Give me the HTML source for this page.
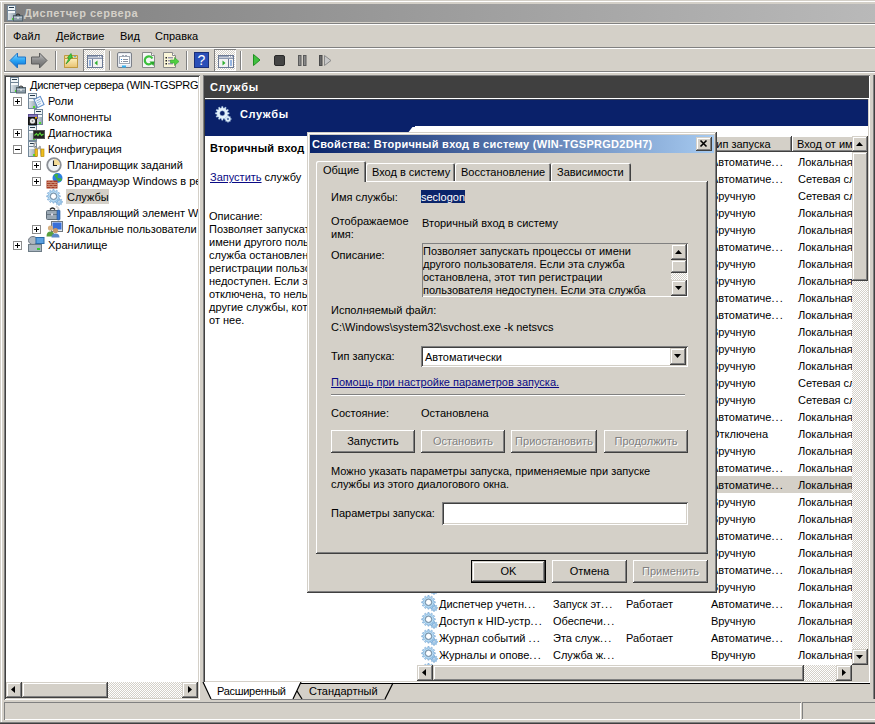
<!DOCTYPE html><html><head><meta charset="utf-8"><style>
html,body{margin:0;padding:0}
body{width:875px;height:724px;overflow:hidden;position:relative;background:#d4d0c8;font-family:"Liberation Sans",sans-serif;font-size:11px;line-height:13px;color:#000}
.t{position:absolute;white-space:nowrap;height:13px;line-height:13px}
.e{letter-spacing:1.1px}
</style></head><body>
<svg width="0" height="0" style="position:absolute"><defs><linearGradient id="tw" x1="0" x2="1"><stop offset="0" stop-color="#dfe6eb"/><stop offset="1" stop-color="#93a3ae"/></linearGradient><g id="g"><path d="M15.53 12.29 L16.47 12.43 L16.47 13.37 L15.53 13.51 L15.22 14.26 L15.78 15.02 L15.12 15.68 L14.36 15.12 L13.61 15.43 L13.47 16.37 L12.53 16.37 L12.39 15.43 L11.64 15.12 L10.88 15.68 L10.22 15.02 L10.78 14.26 L10.47 13.51 L9.53 13.37 L9.53 12.43 L10.47 12.29 L10.78 11.54 L10.22 10.78 L10.88 10.12 L11.64 10.68 L12.39 10.37 L12.53 9.43 L13.47 9.43 L13.61 10.37 L14.36 10.68 L15.12 10.12 L15.78 10.78 L15.22 11.54Z M14.10 12.90 A1.1 1.1 0 1 0 11.90 12.90 A1.1 1.1 0 1 0 14.10 12.90Z" fill="#a8d0ee" stroke="#6a9ccc" stroke-width="0.6" fill-rule="evenodd"/><path d="M12.64 6.49 L14.27 6.70 L14.27 7.90 L12.64 8.11 L12.35 9.16 L13.67 10.16 L13.06 11.21 L11.54 10.57 L10.77 11.34 L11.41 12.86 L10.36 13.47 L9.36 12.15 L8.31 12.44 L8.10 14.07 L6.90 14.07 L6.69 12.44 L5.64 12.15 L4.64 13.47 L3.59 12.86 L4.23 11.34 L3.46 10.57 L1.94 11.21 L1.33 10.16 L2.65 9.16 L2.36 8.11 L0.73 7.90 L0.73 6.70 L2.36 6.49 L2.65 5.44 L1.33 4.44 L1.94 3.39 L3.46 4.03 L4.23 3.26 L3.59 1.74 L4.64 1.13 L5.64 2.45 L6.69 2.16 L6.90 0.53 L8.10 0.53 L8.31 2.16 L9.36 2.45 L10.36 1.13 L11.41 1.74 L10.77 3.26 L11.54 4.03 L13.06 3.39 L13.67 4.44 L12.35 5.44Z M10.50 7.30 A3.0 3.0 0 1 0 4.50 7.30 A3.0 3.0 0 1 0 10.50 7.30Z" fill="#b4daf4" stroke="#6a9ccc" stroke-width="0.6" fill-rule="evenodd"/><circle cx="7.5" cy="7.3" r="3.3" fill="none" stroke="#6e7c8a" stroke-width="0.7"/></g></defs></svg>
<div style="position:absolute;left:0px;top:1px;width:875px;height:1px;background:#ffffff"></div>
<div style="position:absolute;left:1px;top:1px;width:1px;height:721px;background:#ffffff"></div>
<div style="position:absolute;left:4px;top:4px;width:871px;height:18px;background:linear-gradient(90deg,#808080,#b9b9b9)"></div>
<div class="t" style="left:24px;top:7px;font-weight:bold;font-size:11px;line-height:13px;color:#d4d0c8;letter-spacing:0.5px">Диспетчер сервера</div>
<div style="position:absolute;left:4px;top:23px;width:871px;height:1px;background:#808080"></div>
<div style="position:absolute;left:5px;top:24px;width:870px;height:1px;background:#ffffff"></div>
<div style="position:absolute;left:4px;top:23px;width:1px;height:49px;background:#808080"></div>
<div style="position:absolute;left:5px;top:24px;width:1px;height:48px;background:#ffffff"></div>
<div class="t" style="left:13px;top:30px;">Файл</div>
<div class="t" style="left:56px;top:30px;">Действие</div>
<div class="t" style="left:120px;top:30px;">Вид</div>
<div class="t" style="left:155px;top:30px;">Справка</div>
<div style="position:absolute;left:5px;top:47px;width:870px;height:1px;background:#808080"></div>
<div style="position:absolute;left:5px;top:48px;width:870px;height:1px;background:#ffffff"></div>
<div style="position:absolute;left:5px;top:71px;width:870px;height:1px;background:#808080"></div>
<div style="position:absolute;left:4px;top:72px;width:871px;height:1px;background:#ffffff"></div>
<svg style="position:absolute;left:9px;top:52px" width="18" height="17"><defs><linearGradient id="ab" x1="0" y1="0" x2="0" y2="1"><stop offset="0" stop-color="#8fdcff"/><stop offset="0.5" stop-color="#2aa4f4"/><stop offset="1" stop-color="#0a6ad0"/></linearGradient><linearGradient id="af" x1="0" y1="0" x2="0" y2="1"><stop offset="0" stop-color="#c8c8c8"/><stop offset="0.5" stop-color="#8a8a8a"/><stop offset="1" stop-color="#6a6a6a"/></linearGradient></defs><path d="M1 8.5 L8.5 1 L8.5 5 L16.5 5 L16.5 12 L8.5 12 L8.5 16 Z" fill="url(#ab)" stroke="#1d74c8" stroke-width="1"/></svg>
<svg style="position:absolute;left:30px;top:52px" width="18" height="17"><path d="M17 8.5 L9.5 1 L9.5 5 L1.5 5 L1.5 12 L9.5 12 L9.5 16 Z" fill="url(#af)" stroke="#5c5c5c" stroke-width="1"/></svg>
<div style="position:absolute;left:55px;top:51px;width:1px;height:19px;background:#808080"></div>
<div style="position:absolute;left:56px;top:51px;width:1px;height:19px;background:#ffffff"></div>
<svg style="position:absolute;left:63px;top:53px" width="17" height="16"><defs><linearGradient id="fd" x1="0" y1="0" x2="0" y2="1"><stop offset="0" stop-color="#fdeebc"/><stop offset="1" stop-color="#e8c270"/></linearGradient></defs><path d="M1.5 2.5 L14.5 2.5 L14.5 14.5 L1.5 14.5Z" fill="#f0d690" stroke="#c09a40"/><path d="M1.5 5.5 L14.5 5.5 L14.5 14.5 L1.5 14.5Z" fill="url(#fd)" stroke="#c09a40"/><rect x="11" y="3.2" width="2" height="1" fill="#3aa0e8"/><path d="M3 11 Q5 7 6 5 L4.5 4.5 L8 0.5 L9.5 5 L8 4.8 Q7 8 3 11Z" fill="#3ccc3c" stroke="#1e8a1e" stroke-width="0.6"/></svg>
<div style="position:absolute;left:83px;top:49px;width:22px;height:22px;box-shadow:inset 1px 1px #808080,inset -1px -1px #ffffff;background-color:#fff;background-image:linear-gradient(45deg,#d4d0c8 25%,transparent 25%,transparent 75%,#d4d0c8 75%),linear-gradient(45deg,#d4d0c8 25%,transparent 25%,transparent 75%,#d4d0c8 75%);background-size:2px 2px;background-position:0 0,1px 1px"></div>
<svg style="position:absolute;left:87px;top:55px" width="16" height="13"><rect x="0.5" y="0.5" width="15" height="12" fill="#f2f2f2" stroke="#6c7a94"/><rect x="1" y="1" width="14" height="1.5" fill="#9aa6bc"/><rect x="11" y="1" width="1" height="1" fill="#fff"/><rect x="13" y="1" width="1" height="1" fill="#fff"/><rect x="1" y="3" width="14" height="1" fill="#8c98b0"/><rect x="5" y="4" width="1" height="8" fill="#6c7a94"/><rect x="2" y="5.5" width="2" height="1" fill="#3a78d0"/><rect x="2" y="7.5" width="2" height="1" fill="#3a78d0"/><rect x="2" y="9.5" width="2" height="1" fill="#3a78d0"/><path d="M10.5 5.5 L7.5 8 L10.5 10.5Z" fill="#30b030"/></svg>
<div style="position:absolute;left:109px;top:51px;width:1px;height:19px;background:#808080"></div>
<div style="position:absolute;left:110px;top:51px;width:1px;height:19px;background:#ffffff"></div>
<svg style="position:absolute;left:117px;top:52px" width="16" height="16"><rect x="0.5" y="0.5" width="14" height="15" rx="1.5" fill="#e4e8ee" stroke="#7c8088"/><rect x="2" y="2" width="11" height="11" fill="#f8f8fa"/><rect x="2.5" y="4.5" width="10" height="7" fill="#fff" stroke="#a0a8b4"/><rect x="5" y="3" width="2" height="1.5" fill="#a0a8b4"/><rect x="8" y="3" width="2" height="1.5" fill="#a0a8b4"/><rect x="4" y="7" width="1" height="1" fill="#2a8ae0"/><rect x="6" y="7" width="5" height="1" fill="#8890a0"/><rect x="4" y="9" width="1" height="1" fill="#8890a0"/><rect x="6" y="9" width="5" height="1" fill="#8890a0"/><rect x="5" y="13.5" width="4" height="2" fill="#30b0f0"/></svg>
<svg style="position:absolute;left:142px;top:52px" width="14" height="16"><path d="M0.5 0.5 L9.5 0.5 L12.5 3.5 L12.5 15.5 L0.5 15.5Z" fill="#f6f6f6" stroke="#8a8a8a"/><path d="M9.5 0.5 L9.5 3.5 L12.5 3.5" fill="#fff" stroke="#8a8a8a"/><path d="M9.6 11.2 A4 4 0 1 1 10.4 6.6" fill="none" stroke="#3cc03c" stroke-width="2.2"/><path d="M7.5 9.5 L12.5 9.5 L11.5 14Z" fill="#2aa82a"/></svg>
<svg style="position:absolute;left:163px;top:52px" width="17" height="16"><path d="M0.5 0.5 L9.5 0.5 L12.5 3.5 L12.5 15.5 L0.5 15.5Z" fill="#fbf6d8" stroke="#8a8a8a"/><path d="M9.5 0.5 L9.5 3.5 L12.5 3.5" fill="#fff" stroke="#8a8a8a"/><rect x="2.5" y="5" width="1.5" height="1.5" fill="#222"/><rect x="2.5" y="8" width="1.5" height="1.5" fill="#222"/><rect x="2.5" y="11" width="1.5" height="1.5" fill="#222"/><rect x="5" y="5.3" width="5" height="1" fill="#7070a0"/><rect x="5" y="8.3" width="5" height="1" fill="#7070a0"/><rect x="5" y="11.3" width="5" height="1" fill="#7070a0"/><path d="M7.5 8 L11.5 8 L11.5 5.5 L16 9.5 L11.5 13.5 L11.5 11 L7.5 11Z" fill="#50d040" stroke="#34a030" stroke-width="0.6"/></svg>
<div style="position:absolute;left:186px;top:51px;width:1px;height:19px;background:#808080"></div>
<div style="position:absolute;left:187px;top:51px;width:1px;height:19px;background:#ffffff"></div>
<svg style="position:absolute;left:194px;top:52px" width="15" height="16"><rect x="0.5" y="0.5" width="14" height="15" fill="#2a4fb8" stroke="#1a2f78"/><text x="7.5" y="13" font-family="Liberation Sans" font-size="14" fill="#fff" text-anchor="middle">?</text></svg>
<div style="position:absolute;left:214px;top:49px;width:22px;height:22px;box-shadow:inset 1px 1px #808080,inset -1px -1px #ffffff;background-color:#fff;background-image:linear-gradient(45deg,#d4d0c8 25%,transparent 25%,transparent 75%,#d4d0c8 75%),linear-gradient(45deg,#d4d0c8 25%,transparent 25%,transparent 75%,#d4d0c8 75%);background-size:2px 2px;background-position:0 0,1px 1px"></div>
<svg style="position:absolute;left:218px;top:55px" width="16" height="13"><rect x="0.5" y="0.5" width="15" height="12" fill="#f2f2f2" stroke="#6c7a94"/><rect x="1" y="1" width="14" height="1.5" fill="#9aa6bc"/><rect x="11" y="1" width="1" height="1" fill="#fff"/><rect x="13" y="1" width="1" height="1" fill="#fff"/><rect x="1" y="3" width="14" height="1" fill="#8c98b0"/><rect x="10" y="4" width="1" height="8" fill="#6c7a94"/><rect x="12" y="5.5" width="2" height="1" fill="#3a78d0"/><rect x="12" y="7.5" width="2" height="1" fill="#3a78d0"/><rect x="12" y="9.5" width="2" height="1" fill="#3a78d0"/><path d="M4.5 5.5 L7.5 8 L4.5 10.5Z" fill="#30b030"/></svg>
<div style="position:absolute;left:240px;top:51px;width:1px;height:19px;background:#808080"></div>
<div style="position:absolute;left:241px;top:51px;width:1px;height:19px;background:#ffffff"></div>
<svg style="position:absolute;left:253px;top:54px" width="8" height="12"><path d="M0.5 0.5 L7 6 L0.5 11.5Z" fill="#40c040" stroke="#209020"/></svg>
<svg style="position:absolute;left:274px;top:55px" width="11" height="11"><rect x="0.5" y="0.5" width="10" height="10" rx="1.5" fill="#444" stroke="#2a2a2a"/></svg>
<svg style="position:absolute;left:298px;top:55px" width="9" height="11"><rect x="0.5" y="0.5" width="2.5" height="10" fill="#8a8a8a" stroke="#5a5a5a"/><rect x="5.5" y="0.5" width="2.5" height="10" fill="#8a8a8a" stroke="#5a5a5a"/></svg>
<svg style="position:absolute;left:319px;top:55px" width="13" height="11"><rect x="0.5" y="0.5" width="2.5" height="10" fill="#6a6a6a" stroke="#4a4a4a"/><path d="M5.5 0.5 L12 5.5 L5.5 10.5Z" fill="#c8c8c8" stroke="#8a8a8a"/></svg>
<div style="position:absolute;left:4px;top:75px;width:196px;height:625px;background:#ffffff;box-shadow:inset 1px 1px #808080,inset -1px -1px #ffffff,inset 2px 2px #404040,inset -2px -2px #d4d0c8"></div>
<div style="position:absolute;left:6px;top:77px;width:192px;height:605px;overflow:hidden">
<div class="t" style="left:24px;top:2px;letter-spacing:-0.3px">Диспетчер сервера (WIN-TGSPRGD2DH7)</div>
<div style="position:absolute;left:7px;top:20px;width:9px;height:9px;background:#fff;box-shadow:inset 0 0 0 1px #8c8c8c"></div>
<div style="position:absolute;left:9px;top:24px;width:5px;height:1px;background:#000"></div>
<div style="position:absolute;left:11px;top:22px;width:1px;height:5px;background:#000"></div>
<div class="t" style="left:42px;top:18px;">Роли</div>
<div class="t" style="left:42px;top:34px;">Компоненты</div>
<div style="position:absolute;left:7px;top:52px;width:9px;height:9px;background:#fff;box-shadow:inset 0 0 0 1px #8c8c8c"></div>
<div style="position:absolute;left:9px;top:56px;width:5px;height:1px;background:#000"></div>
<div style="position:absolute;left:11px;top:54px;width:1px;height:5px;background:#000"></div>
<div class="t" style="left:42px;top:50px;">Диагностика</div>
<div style="position:absolute;left:7px;top:68px;width:9px;height:9px;background:#fff;box-shadow:inset 0 0 0 1px #8c8c8c"></div>
<div style="position:absolute;left:9px;top:72px;width:5px;height:1px;background:#000"></div>
<div class="t" style="left:42px;top:66px;">Конфигурация</div>
<div style="position:absolute;left:26px;top:84px;width:9px;height:9px;background:#fff;box-shadow:inset 0 0 0 1px #8c8c8c"></div>
<div style="position:absolute;left:28px;top:88px;width:5px;height:1px;background:#000"></div>
<div style="position:absolute;left:30px;top:86px;width:1px;height:5px;background:#000"></div>
<div class="t" style="left:61px;top:82px;">Планировщик заданий</div>
<div style="position:absolute;left:26px;top:100px;width:9px;height:9px;background:#fff;box-shadow:inset 0 0 0 1px #8c8c8c"></div>
<div style="position:absolute;left:28px;top:104px;width:5px;height:1px;background:#000"></div>
<div style="position:absolute;left:30px;top:102px;width:1px;height:5px;background:#000"></div>
<div class="t" style="left:61px;top:98px;">Брандмауэр Windows в режиме повышенной безопасности</div>
<div style="position:absolute;left:60px;top:112px;width:43px;height:15px;background:#d4d0c8"></div>
<div class="t" style="left:61px;top:114px;">Службы</div>
<div class="t" style="left:61px;top:130px;">Управляющий элемент WMI</div>
<div style="position:absolute;left:26px;top:148px;width:9px;height:9px;background:#fff;box-shadow:inset 0 0 0 1px #8c8c8c"></div>
<div style="position:absolute;left:28px;top:152px;width:5px;height:1px;background:#000"></div>
<div style="position:absolute;left:30px;top:150px;width:1px;height:5px;background:#000"></div>
<div class="t" style="left:61px;top:146px;">Локальные пользователи и группы</div>
<div style="position:absolute;left:7px;top:164px;width:9px;height:9px;background:#fff;box-shadow:inset 0 0 0 1px #8c8c8c"></div>
<div style="position:absolute;left:9px;top:168px;width:5px;height:1px;background:#000"></div>
<div style="position:absolute;left:11px;top:166px;width:1px;height:5px;background:#000"></div>
<div class="t" style="left:42px;top:162px;">Хранилище</div>
</div>
<svg style="position:absolute;left:10px;top:77px" width="17" height="17"><g transform="translate(0,0)"><defs></defs><rect x="0.5" y="0.5" width="8" height="15" fill="url(#tw)" stroke="#74889a"/><rect x="1" y="1" width="7" height="4" fill="#eef3f6"/><rect x="2" y="2" width="5" height="1" fill="#24394a"/><rect x="1" y="6" width="7" height="2" fill="#f4f7f9"/><rect x="1" y="5" width="7" height="1" fill="#6e8294"/><rect x="5" y="13" width="2" height="2" fill="#4fdc2f"/></g><rect x="6.5" y="10.5" width="9" height="5.5" fill="#8c9ca8" stroke="#56666f"/><rect x="7" y="12" width="8" height="1" fill="#b8c4cc"/><path d="M9 10.5 Q11 7.5 13 10.5" fill="none" stroke="#222" stroke-width="1.2"/><rect x="10.5" y="12" width="1" height="2" fill="#fff"/></svg>
<svg style="position:absolute;left:7px;top:5px" width="17" height="17"><g transform="translate(0,0)"><defs></defs><rect x="0.5" y="0.5" width="8" height="15" fill="url(#tw)" stroke="#74889a"/><rect x="1" y="1" width="7" height="4" fill="#eef3f6"/><rect x="2" y="2" width="5" height="1" fill="#24394a"/><rect x="1" y="6" width="7" height="2" fill="#f4f7f9"/><rect x="1" y="5" width="7" height="1" fill="#6e8294"/><rect x="5" y="13" width="2" height="2" fill="#4fdc2f"/></g><rect x="6.5" y="10.5" width="9" height="5.5" fill="#8c9ca8" stroke="#56666f"/><rect x="7" y="12" width="8" height="1" fill="#b8c4cc"/><path d="M9 10.5 Q11 7.5 13 10.5" fill="none" stroke="#222" stroke-width="1.2"/><rect x="10.5" y="12" width="1" height="2" fill="#fff"/></svg>
<svg style="position:absolute;left:28px;top:93px" width="17" height="16"><g transform="translate(0,0)"><defs></defs><rect x="0.5" y="0.5" width="8" height="15" fill="url(#tw)" stroke="#74889a"/><rect x="1" y="1" width="7" height="4" fill="#eef3f6"/><rect x="2" y="2" width="5" height="1" fill="#24394a"/><rect x="1" y="6" width="7" height="2" fill="#f4f7f9"/><rect x="1" y="5" width="7" height="1" fill="#6e8294"/><rect x="5" y="13" width="2" height="2" fill="#4fdc2f"/></g><g transform="rotate(-25 11 9)"><rect x="7.5" y="4.5" width="7" height="9" fill="#f2f6fb" stroke="#5c8cc8"/><path d="M9 7 H13 M9 9 H13 M9 11 H12" stroke="#8ab0d8" stroke-width="0.8"/></g></svg>
<svg style="position:absolute;left:28px;top:109px" width="17" height="16"><g transform="translate(6,0)"><defs></defs><rect x="0.5" y="0.5" width="8" height="15" fill="url(#tw)" stroke="#74889a"/><rect x="1" y="1" width="7" height="4" fill="#eef3f6"/><rect x="2" y="2" width="5" height="1" fill="#24394a"/><rect x="1" y="6" width="7" height="2" fill="#f4f7f9"/><rect x="1" y="5" width="7" height="1" fill="#6e8294"/><rect x="5" y="13" width="2" height="2" fill="#4fdc2f"/></g><rect x="0.5" y="5.5" width="9" height="4" fill="#8478b8" stroke="#5a4e90"/><rect x="0.5" y="8.5" width="8" height="7" fill="#2a2a2a" stroke="#111"/><circle cx="4.5" cy="12" r="2.6" fill="#e8e8e8"/><circle cx="4.5" cy="12" r="0.8" fill="#777"/><rect x="7" y="8" width="2" height="1.5" fill="#f0b000"/></svg>
<svg style="position:absolute;left:28px;top:125px" width="17" height="16"><g transform="translate(0,0)"><defs></defs><rect x="0.5" y="0.5" width="8" height="15" fill="url(#tw)" stroke="#74889a"/><rect x="1" y="1" width="7" height="4" fill="#eef3f6"/><rect x="2" y="2" width="5" height="1" fill="#24394a"/><rect x="1" y="6" width="7" height="2" fill="#f4f7f9"/><rect x="1" y="5" width="7" height="1" fill="#6e8294"/><rect x="5" y="13" width="2" height="2" fill="#4fdc2f"/></g><rect x="5.5" y="5.5" width="11" height="8" fill="#222" stroke="#555"/><path d="M6.5 10.5 L8.5 8.5 L10 10.5 L12 8 L13.5 10.5 L15.5 9" fill="none" stroke="#5cd83a" stroke-width="1.1"/></svg>
<svg style="position:absolute;left:28px;top:141px" width="17" height="16"><g transform="translate(0,0)"><defs></defs><rect x="0.5" y="0.5" width="8" height="15" fill="url(#tw)" stroke="#74889a"/><rect x="1" y="1" width="7" height="4" fill="#eef3f6"/><rect x="2" y="2" width="5" height="1" fill="#24394a"/><rect x="1" y="6" width="7" height="2" fill="#f4f7f9"/><rect x="1" y="5" width="7" height="1" fill="#6e8294"/><rect x="5" y="13" width="2" height="2" fill="#4fdc2f"/></g><path d="M9 1.5 A3 3 0 1 0 12 5 L13.5 15.5" fill="none" stroke="#a8a8a8" stroke-width="1.6"/><rect x="7" y="8" width="2.5" height="7.5" fill="#f0c020" stroke="#b08000" stroke-width="0.6"/><rect x="13" y="8" width="3" height="7.5" fill="#f0c020" stroke="#b08000" stroke-width="0.6"/></svg>
<svg style="position:absolute;left:46px;top:157px" width="17" height="16"><circle cx="8" cy="8" r="6.8" fill="#eef2f6" stroke="#8c9096" stroke-width="1.8"/><path d="M8 2 A6 6 0 0 1 14 8 L8 8Z" fill="#f4dc98"/><path d="M7.5 3.5 L7.5 8.5 L11 8.5" stroke="#222" stroke-width="1.1" fill="none"/></svg>
<svg style="position:absolute;left:46px;top:172px" width="17" height="17"><circle cx="11.5" cy="6" r="5" fill="#2a7ee0"/><path d="M8 3 Q10 1 12 2 Q13 4 11 5 Q13 7 15 6 L16 8 Q14 10 12 9Z" fill="#40b040"/><rect x="0.5" y="8.5" width="11" height="8" fill="#a83c24"/><path d="M0.5 10.5 H11.5 M0.5 12.5 H11.5 M0.5 14.5 H11.5 M3 8.5 V10.5 M7 8.5 V10.5 M5 10.5 V12.5 M9 10.5 V12.5 M3 12.5 V14.5 M7 12.5 V14.5 M5 14.5 V16.5 M9 14.5 V16.5" stroke="#d8a890" stroke-width="0.7"/></svg>
<svg style="position:absolute;left:46px;top:189px" width="17" height="17"><use href="#g"/></svg>
<svg style="position:absolute;left:46px;top:205px" width="17" height="17"><path d="M4 4.5 Q6.5 1.5 9 4.5" fill="none" stroke="#222" stroke-width="1.4"/><rect x="0.5" y="5.5" width="12" height="9" rx="1" fill="#9aa8b4" stroke="#5e6c78"/><rect x="1" y="9" width="11" height="1" fill="#6a7884"/><rect x="5" y="8.5" width="2" height="2" fill="#dde"/><path d="M10 1 L13 4" stroke="#d8d8d8" stroke-width="2"/><rect x="11" y="5" width="3" height="10" rx="1" fill="#3a78d0" stroke="#24508c" stroke-width="0.6"/></svg>
<svg style="position:absolute;left:46px;top:221px" width="17" height="17"><rect x="5.5" y="0.5" width="11" height="10" fill="#e8ecf0" stroke="#707880"/><rect x="6.5" y="1.5" width="9" height="7" fill="#3a70d8"/><circle cx="4.5" cy="7" r="2.6" fill="#d8b080"/><path d="M0.5 15.5 Q0.5 10.5 4.5 10.5 Q8.5 10.5 8.5 15.5Z" fill="#58a040"/><circle cx="9.5" cy="9.5" r="2.6" fill="#c89868"/><path d="M5.5 16.5 Q5.5 12.5 9.5 12.5 Q13.5 12.5 13.5 16.5Z" fill="#5a88c8"/></svg>
<svg style="position:absolute;left:28px;top:236px" width="17" height="16"><rect x="0.5" y="8.5" width="13" height="7" fill="#aab6c0" stroke="#6e7c86"/><rect x="9" y="12" width="3" height="2" fill="#3c3"/><ellipse cx="5" cy="4.5" rx="4.5" ry="4" fill="#b0b8c0" stroke="#707880"/><rect x="8" y="1.5" width="8" height="6" fill="#5aa0e0" stroke="#2a6aa8"/></svg>
<div style="position:absolute;left:6px;top:682px;width:192px;height:16px;background-color:#ffffff;background-image:linear-gradient(45deg,#d4d0c8 25%,transparent 25%,transparent 75%,#d4d0c8 75%),linear-gradient(45deg,#d4d0c8 25%,transparent 25%,transparent 75%,#d4d0c8 75%);background-size:2px 2px;background-position:0 0,1px 1px"></div>
<div style="position:absolute;left:6px;top:682px;width:16px;height:16px;box-shadow:inset -1px -1px #404040,inset 1px 1px #d4d0c8,inset -2px -2px #808080,inset 2px 2px #ffffff;background:#d4d0c8"></div>
<svg style="position:absolute;left:6px;top:682px" width="16" height="16"><polygon points="9,4 9,11 5,7.5" fill="#000"/></svg>
<div style="position:absolute;left:182px;top:682px;width:16px;height:16px;box-shadow:inset -1px -1px #404040,inset 1px 1px #d4d0c8,inset -2px -2px #808080,inset 2px 2px #ffffff;background:#d4d0c8"></div>
<svg style="position:absolute;left:182px;top:682px" width="16" height="16"><polygon points="6,4 6,11 10,7.5" fill="#000"/></svg>
<div style="position:absolute;left:22px;top:682px;width:86px;height:16px;box-shadow:inset -1px -1px #404040,inset 1px 1px #d4d0c8,inset -2px -2px #808080,inset 2px 2px #ffffff;background:#d4d0c8"></div>
<div style="position:absolute;left:4px;top:702px;width:880px;height:18px;box-shadow:inset 1px 1px #808080,inset -1px -1px #ffffff;background:#d4d0c8"></div>
<div style="position:absolute;left:800px;top:703px;width:1px;height:17px;background:#ffffff"></div>
<div style="position:absolute;left:801px;top:702px;width:1px;height:18px;background:#d4d0c8"></div>
<div style="position:absolute;left:802px;top:703px;width:1px;height:16px;background:#808080"></div>
<div style="position:absolute;left:0px;top:722px;width:875px;height:1px;background:#808080"></div>
<div style="position:absolute;left:0px;top:723px;width:875px;height:1px;background:#404040"></div>
<div style="position:absolute;left:203px;top:75px;width:667px;height:608px;background:#ffffff;box-shadow:inset 1px 1px #808080,inset -1px -1px #ffffff,inset 2px 2px #404040,inset -2px -2px #d4d0c8"></div>
<div style="position:absolute;left:205px;top:77px;width:664px;height:21px;background:#404040"></div>
<div class="t" style="left:210px;top:81px;font-weight:bold;font-size:11px;line-height:13px;color:#fff;letter-spacing:0.6px">Службы</div>
<div style="position:absolute;left:205px;top:98px;width:664px;height:1px;background:#ffffff"></div>
<div style="position:absolute;left:205px;top:99px;width:663px;height:1px;background:#3a4050"></div>
<div style="position:absolute;left:205px;top:100px;width:663px;height:26px;background:#0a216a"></div>
<div style="position:absolute;left:205px;top:126px;width:203px;height:10px;background:#0a216a"></div>
<svg style="position:absolute;left:405px;top:126px" width="12" height="10"><path d="M0 0 L10 0 L10 1 L7.5 1 L2.8 7 L0 7Z" fill="#0a216a"/></svg>
<svg style="position:absolute;left:213px;top:104px" width="20" height="20"><path d="M17.43 14.42 L18.27 14.56 L18.27 15.44 L17.43 15.58 L17.13 16.31 L17.62 17.00 L17.00 17.62 L16.31 17.13 L15.58 17.43 L15.44 18.27 L14.56 18.27 L14.42 17.43 L13.69 17.13 L13.00 17.62 L12.38 17.00 L12.87 16.31 L12.57 15.58 L11.73 15.44 L11.73 14.56 L12.57 14.42 L12.87 13.69 L12.38 13.00 L13.00 12.38 L13.69 12.87 L14.42 12.57 L14.56 11.73 L15.44 11.73 L15.58 12.57 L16.31 12.87 L17.00 12.38 L17.62 13.00 L17.13 13.69Z M15.90 15.00 A0.9 0.9 0 1 0 14.10 15.00 A0.9 0.9 0 1 0 15.90 15.00Z" fill="#e4f2fb" stroke="#b0d0e8" stroke-width="0.4" fill-rule="evenodd"/><path d="M14.63 8.46 L16.17 8.69 L16.17 9.91 L14.63 10.14 L14.34 11.24 L15.56 12.21 L14.95 13.27 L13.50 12.70 L12.70 13.50 L13.27 14.95 L12.21 15.56 L11.24 14.34 L10.14 14.63 L9.91 16.17 L8.69 16.17 L8.46 14.63 L7.36 14.34 L6.39 15.56 L5.33 14.95 L5.90 13.50 L5.10 12.70 L3.65 13.27 L3.04 12.21 L4.26 11.24 L3.97 10.14 L2.43 9.91 L2.43 8.69 L3.97 8.46 L4.26 7.36 L3.04 6.39 L3.65 5.33 L5.10 5.90 L5.90 5.10 L5.33 3.65 L6.39 3.04 L7.36 4.26 L8.46 3.97 L8.69 2.43 L9.91 2.43 L10.14 3.97 L11.24 4.26 L12.21 3.04 L13.27 3.65 L12.70 5.10 L13.50 5.90 L14.95 5.33 L15.56 6.39 L14.34 7.36Z M11.80 9.30 A2.5 2.5 0 1 0 6.80 9.30 A2.5 2.5 0 1 0 11.80 9.30Z" fill="#e4f2fb" stroke="#b0d0e8" stroke-width="0.4" fill-rule="evenodd"/></svg>
<div class="t" style="left:240px;top:108px;font-weight:bold;font-size:11px;line-height:13px;color:#fff;letter-spacing:0.6px">Службы</div>
<div class="t" style="left:210px;top:142px;font-weight:bold;line-height:13px;letter-spacing:0.2px">Вторичный вход в систему</div>
<div class="t" style="left:210px;top:171px;"><span style="color:#0a0a84;text-decoration:underline">Запустить</span> службу</div>
<div class="t" style="left:209px;top:210px;">Описание:</div>
<div class="t" style="left:209px;top:223px;">Позволяет запускать процессы от</div>
<div class="t" style="left:209px;top:236px;">имени другого пользователя. Если эта</div>
<div class="t" style="left:209px;top:249px;">служба остановлена, этот тип</div>
<div class="t" style="left:209px;top:262px;">регистрации пользователя</div>
<div class="t" style="left:209px;top:275px;">недоступен. Если эта служба</div>
<div class="t" style="left:209px;top:288px;">отключена, то нельзя запустить</div>
<div class="t" style="left:209px;top:301px;">другие службы, которые явно зависят</div>
<div class="t" style="left:209px;top:314px;">от нее.</div>
<div style="position:absolute;left:417px;top:136px;width:435px;height:529px;overflow:hidden;background:#fff">
<div style="position:absolute;left:0px;top:0px;width:131px;height:16px;box-shadow:inset -1px -1px #404040,inset 1px 1px #ffffff,inset -2px -2px #808080;background:#d4d0c8"></div>
<div class="t" style="left:5px;top:2px">Имя</div>
<div style="position:absolute;left:131px;top:0px;width:74px;height:16px;box-shadow:inset -1px -1px #404040,inset 1px 1px #ffffff,inset -2px -2px #808080;background:#d4d0c8"></div>
<div class="t" style="left:136px;top:2px">Описание</div>
<div style="position:absolute;left:205px;top:0px;width:85px;height:16px;box-shadow:inset -1px -1px #404040,inset 1px 1px #ffffff,inset -2px -2px #808080;background:#d4d0c8"></div>
<div class="t" style="left:210px;top:2px">Состояние</div>
<div style="position:absolute;left:290px;top:0px;width:85px;height:16px;box-shadow:inset -1px -1px #404040,inset 1px 1px #ffffff,inset -2px -2px #808080;background:#d4d0c8"></div>
<div class="t" style="left:293px;top:2px">Тип запуска</div>
<div style="position:absolute;left:375px;top:0px;width:80px;height:16px;box-shadow:inset -1px -1px #404040,inset 1px 1px #ffffff,inset -2px -2px #808080;background:#d4d0c8"></div>
<div class="t" style="left:380px;top:2px">Вход от имени</div>
<svg style="position:absolute;left:4px;top:17px" width="17" height="17"><use href="#g"/></svg>
<div class="t" style="left:22px;top:20px">Служба</div>
<div class="t" style="left:136px;top:20px">Описание</div>
<div class="t" style="left:209px;top:20px"></div>
<div class="t" style="left:294px;top:20px">Автоматиче<span class="e">...</span></div>
<div class="t" style="left:381px;top:20px">Локальная сл<span class="e">...</span></div>
<svg style="position:absolute;left:4px;top:34px" width="17" height="17"><use href="#g"/></svg>
<div class="t" style="left:22px;top:37px">Служба</div>
<div class="t" style="left:136px;top:37px">Описание</div>
<div class="t" style="left:209px;top:37px"></div>
<div class="t" style="left:294px;top:37px">Автоматиче<span class="e">...</span></div>
<div class="t" style="left:381px;top:37px">Сетевая сл<span class="e">...</span></div>
<svg style="position:absolute;left:4px;top:51px" width="17" height="17"><use href="#g"/></svg>
<div class="t" style="left:22px;top:54px">Служба</div>
<div class="t" style="left:136px;top:54px">Описание</div>
<div class="t" style="left:209px;top:54px"></div>
<div class="t" style="left:294px;top:54px">Вручную</div>
<div class="t" style="left:381px;top:54px">Сетевая сл<span class="e">...</span></div>
<svg style="position:absolute;left:4px;top:68px" width="17" height="17"><use href="#g"/></svg>
<div class="t" style="left:22px;top:71px">Служба</div>
<div class="t" style="left:136px;top:71px">Описание</div>
<div class="t" style="left:209px;top:71px"></div>
<div class="t" style="left:294px;top:71px">Вручную</div>
<div class="t" style="left:381px;top:71px">Локальная сл<span class="e">...</span></div>
<svg style="position:absolute;left:4px;top:85px" width="17" height="17"><use href="#g"/></svg>
<div class="t" style="left:22px;top:88px">Служба</div>
<div class="t" style="left:136px;top:88px">Описание</div>
<div class="t" style="left:209px;top:88px"></div>
<div class="t" style="left:294px;top:88px">Вручную</div>
<div class="t" style="left:381px;top:88px">Локальная сл<span class="e">...</span></div>
<svg style="position:absolute;left:4px;top:102px" width="17" height="17"><use href="#g"/></svg>
<div class="t" style="left:22px;top:105px">Служба</div>
<div class="t" style="left:136px;top:105px">Описание</div>
<div class="t" style="left:209px;top:105px"></div>
<div class="t" style="left:294px;top:105px">Автоматиче<span class="e">...</span></div>
<div class="t" style="left:381px;top:105px">Локальная сл<span class="e">...</span></div>
<svg style="position:absolute;left:4px;top:119px" width="17" height="17"><use href="#g"/></svg>
<div class="t" style="left:22px;top:122px">Служба</div>
<div class="t" style="left:136px;top:122px">Описание</div>
<div class="t" style="left:209px;top:122px"></div>
<div class="t" style="left:294px;top:122px">Вручную</div>
<div class="t" style="left:381px;top:122px">Локальная сл<span class="e">...</span></div>
<svg style="position:absolute;left:4px;top:136px" width="17" height="17"><use href="#g"/></svg>
<div class="t" style="left:22px;top:139px">Служба</div>
<div class="t" style="left:136px;top:139px">Описание</div>
<div class="t" style="left:209px;top:139px"></div>
<div class="t" style="left:294px;top:139px">Вручную</div>
<div class="t" style="left:381px;top:139px">Локальная сл<span class="e">...</span></div>
<svg style="position:absolute;left:4px;top:153px" width="17" height="17"><use href="#g"/></svg>
<div class="t" style="left:22px;top:156px">Служба</div>
<div class="t" style="left:136px;top:156px">Описание</div>
<div class="t" style="left:209px;top:156px"></div>
<div class="t" style="left:294px;top:156px">Автоматиче<span class="e">...</span></div>
<div class="t" style="left:381px;top:156px">Локальная сл<span class="e">...</span></div>
<svg style="position:absolute;left:4px;top:170px" width="17" height="17"><use href="#g"/></svg>
<div class="t" style="left:22px;top:173px">Служба</div>
<div class="t" style="left:136px;top:173px">Описание</div>
<div class="t" style="left:209px;top:173px"></div>
<div class="t" style="left:294px;top:173px">Автоматиче<span class="e">...</span></div>
<div class="t" style="left:381px;top:173px">Локальная сл<span class="e">...</span></div>
<svg style="position:absolute;left:4px;top:187px" width="17" height="17"><use href="#g"/></svg>
<div class="t" style="left:22px;top:190px">Служба</div>
<div class="t" style="left:136px;top:190px">Описание</div>
<div class="t" style="left:209px;top:190px"></div>
<div class="t" style="left:294px;top:190px">Вручную</div>
<div class="t" style="left:381px;top:190px">Локальная сл<span class="e">...</span></div>
<svg style="position:absolute;left:4px;top:204px" width="17" height="17"><use href="#g"/></svg>
<div class="t" style="left:22px;top:207px">Служба</div>
<div class="t" style="left:136px;top:207px">Описание</div>
<div class="t" style="left:209px;top:207px"></div>
<div class="t" style="left:294px;top:207px">Вручную</div>
<div class="t" style="left:381px;top:207px">Локальная сл<span class="e">...</span></div>
<svg style="position:absolute;left:4px;top:221px" width="17" height="17"><use href="#g"/></svg>
<div class="t" style="left:22px;top:224px">Служба</div>
<div class="t" style="left:136px;top:224px">Описание</div>
<div class="t" style="left:209px;top:224px"></div>
<div class="t" style="left:294px;top:224px">Вручную</div>
<div class="t" style="left:381px;top:224px">Локальная сл<span class="e">...</span></div>
<svg style="position:absolute;left:4px;top:238px" width="17" height="17"><use href="#g"/></svg>
<div class="t" style="left:22px;top:241px">Служба</div>
<div class="t" style="left:136px;top:241px">Описание</div>
<div class="t" style="left:209px;top:241px"></div>
<div class="t" style="left:294px;top:241px">Вручную</div>
<div class="t" style="left:381px;top:241px">Сетевая сл<span class="e">...</span></div>
<svg style="position:absolute;left:4px;top:255px" width="17" height="17"><use href="#g"/></svg>
<div class="t" style="left:22px;top:258px">Служба</div>
<div class="t" style="left:136px;top:258px">Описание</div>
<div class="t" style="left:209px;top:258px"></div>
<div class="t" style="left:294px;top:258px">Вручную</div>
<div class="t" style="left:381px;top:258px">Сетевая сл<span class="e">...</span></div>
<svg style="position:absolute;left:4px;top:272px" width="17" height="17"><use href="#g"/></svg>
<div class="t" style="left:22px;top:275px">Служба</div>
<div class="t" style="left:136px;top:275px">Описание</div>
<div class="t" style="left:209px;top:275px"></div>
<div class="t" style="left:294px;top:275px">Автоматиче<span class="e">...</span></div>
<div class="t" style="left:381px;top:275px">Локальная сл<span class="e">...</span></div>
<svg style="position:absolute;left:4px;top:289px" width="17" height="17"><use href="#g"/></svg>
<div class="t" style="left:22px;top:292px">Служба</div>
<div class="t" style="left:136px;top:292px">Описание</div>
<div class="t" style="left:209px;top:292px"></div>
<div class="t" style="left:294px;top:292px">Отключена</div>
<div class="t" style="left:381px;top:292px">Локальная сл<span class="e">...</span></div>
<svg style="position:absolute;left:4px;top:306px" width="17" height="17"><use href="#g"/></svg>
<div class="t" style="left:22px;top:309px">Служба</div>
<div class="t" style="left:136px;top:309px">Описание</div>
<div class="t" style="left:209px;top:309px"></div>
<div class="t" style="left:294px;top:309px">Вручную</div>
<div class="t" style="left:381px;top:309px">Локальная сл<span class="e">...</span></div>
<svg style="position:absolute;left:4px;top:323px" width="17" height="17"><use href="#g"/></svg>
<div class="t" style="left:22px;top:326px">Служба</div>
<div class="t" style="left:136px;top:326px">Описание</div>
<div class="t" style="left:209px;top:326px"></div>
<div class="t" style="left:294px;top:326px">Автоматиче<span class="e">...</span></div>
<div class="t" style="left:381px;top:326px">Локальная сл<span class="e">...</span></div>
<div style="position:absolute;left:0px;top:340px;width:435px;height:17px;background:#d4d0c8"></div>
<svg style="position:absolute;left:4px;top:340px" width="17" height="17"><use href="#g"/></svg>
<div class="t" style="left:22px;top:343px">Служба</div>
<div class="t" style="left:136px;top:343px">Описание</div>
<div class="t" style="left:209px;top:343px"></div>
<div class="t" style="left:294px;top:343px">Автоматиче<span class="e">...</span></div>
<div class="t" style="left:381px;top:343px">Локальная сл<span class="e">...</span></div>
<svg style="position:absolute;left:4px;top:357px" width="17" height="17"><use href="#g"/></svg>
<div class="t" style="left:22px;top:360px">Служба</div>
<div class="t" style="left:136px;top:360px">Описание</div>
<div class="t" style="left:209px;top:360px"></div>
<div class="t" style="left:294px;top:360px">Вручную</div>
<div class="t" style="left:381px;top:360px">Локальная сл<span class="e">...</span></div>
<svg style="position:absolute;left:4px;top:374px" width="17" height="17"><use href="#g"/></svg>
<div class="t" style="left:22px;top:377px">Служба</div>
<div class="t" style="left:136px;top:377px">Описание</div>
<div class="t" style="left:209px;top:377px"></div>
<div class="t" style="left:294px;top:377px">Вручную</div>
<div class="t" style="left:381px;top:377px">Локальная сл<span class="e">...</span></div>
<svg style="position:absolute;left:4px;top:391px" width="17" height="17"><use href="#g"/></svg>
<div class="t" style="left:22px;top:394px">Служба</div>
<div class="t" style="left:136px;top:394px">Описание</div>
<div class="t" style="left:209px;top:394px"></div>
<div class="t" style="left:294px;top:394px">Автоматиче<span class="e">...</span></div>
<div class="t" style="left:381px;top:394px">Локальная сл<span class="e">...</span></div>
<svg style="position:absolute;left:4px;top:408px" width="17" height="17"><use href="#g"/></svg>
<div class="t" style="left:22px;top:411px">Служба</div>
<div class="t" style="left:136px;top:411px">Описание</div>
<div class="t" style="left:209px;top:411px"></div>
<div class="t" style="left:294px;top:411px">Вручную</div>
<div class="t" style="left:381px;top:411px">Локальная сл<span class="e">...</span></div>
<svg style="position:absolute;left:4px;top:425px" width="17" height="17"><use href="#g"/></svg>
<div class="t" style="left:22px;top:428px">Служба</div>
<div class="t" style="left:136px;top:428px">Описание</div>
<div class="t" style="left:209px;top:428px"></div>
<div class="t" style="left:294px;top:428px">Автоматиче<span class="e">...</span></div>
<div class="t" style="left:381px;top:428px">Локальная сл<span class="e">...</span></div>
<svg style="position:absolute;left:4px;top:442px" width="17" height="17"><use href="#g"/></svg>
<div class="t" style="left:22px;top:445px">Группировка сет<span class="e">...</span></div>
<div class="t" style="left:136px;top:445px">Службы <span class="e">...</span></div>
<div class="t" style="left:209px;top:445px"></div>
<div class="t" style="left:294px;top:445px">Вручную</div>
<div class="t" style="left:381px;top:445px">Локальная сл<span class="e">...</span></div>
<svg style="position:absolute;left:4px;top:459px" width="17" height="17"><use href="#g"/></svg>
<div class="t" style="left:22px;top:462px">Диспетчер учетн<span class="e">...</span></div>
<div class="t" style="left:136px;top:462px">Запуск эт<span class="e">...</span></div>
<div class="t" style="left:209px;top:462px">Работает</div>
<div class="t" style="left:294px;top:462px">Автоматиче<span class="e">...</span></div>
<div class="t" style="left:381px;top:462px">Локальная сл<span class="e">...</span></div>
<svg style="position:absolute;left:4px;top:476px" width="17" height="17"><use href="#g"/></svg>
<div class="t" style="left:22px;top:479px">Доступ к HID-устр<span class="e">...</span></div>
<div class="t" style="left:136px;top:479px">Обеспечи<span class="e">...</span></div>
<div class="t" style="left:209px;top:479px"></div>
<div class="t" style="left:294px;top:479px">Вручную</div>
<div class="t" style="left:381px;top:479px">Локальная сл<span class="e">...</span></div>
<svg style="position:absolute;left:4px;top:493px" width="17" height="17"><use href="#g"/></svg>
<div class="t" style="left:22px;top:496px">Журнал событий <span class="e">...</span></div>
<div class="t" style="left:136px;top:496px">Эта служ<span class="e">...</span></div>
<div class="t" style="left:209px;top:496px">Работает</div>
<div class="t" style="left:294px;top:496px">Автоматиче<span class="e">...</span></div>
<div class="t" style="left:381px;top:496px">Локальная сл<span class="e">...</span></div>
<svg style="position:absolute;left:4px;top:510px" width="17" height="17"><use href="#g"/></svg>
<div class="t" style="left:22px;top:513px">Журналы и опове<span class="e">...</span></div>
<div class="t" style="left:136px;top:513px">Служба ж<span class="e">...</span></div>
<div class="t" style="left:209px;top:513px"></div>
<div class="t" style="left:294px;top:513px">Вручную</div>
<div class="t" style="left:381px;top:513px">Локальная сл<span class="e">...</span></div>
<svg style="position:absolute;left:4px;top:527px" width="17" height="17"><use href="#g"/></svg>
<div class="t" style="left:22px;top:530px">Защитник Windows</div>
<div class="t" style="left:136px;top:530px">Защита о<span class="e">...</span></div>
<div class="t" style="left:209px;top:530px">Работает</div>
<div class="t" style="left:294px;top:530px">Автоматиче<span class="e">...</span></div>
<div class="t" style="left:381px;top:530px">Локальная сл<span class="e">...</span></div>
</div>
<div style="position:absolute;left:852px;top:136px;width:16px;height:529px;background-color:#ffffff;background-image:linear-gradient(45deg,#d4d0c8 25%,transparent 25%,transparent 75%,#d4d0c8 75%),linear-gradient(45deg,#d4d0c8 25%,transparent 25%,transparent 75%,#d4d0c8 75%);background-size:2px 2px;background-position:0 0,1px 1px"></div>
<div style="position:absolute;left:852px;top:136px;width:16px;height:16px;box-shadow:inset -1px -1px #404040,inset 1px 1px #d4d0c8,inset -2px -2px #808080,inset 2px 2px #ffffff;background:#d4d0c8"></div>
<svg style="position:absolute;left:852px;top:136px" width="16" height="16"><polygon points="4,10 11,10 7.5,6" fill="#000"/></svg>
<div style="position:absolute;left:852px;top:152px;width:16px;height:129px;box-shadow:inset -1px -1px #404040,inset 1px 1px #d4d0c8,inset -2px -2px #808080,inset 2px 2px #ffffff;background:#d4d0c8"></div>
<div style="position:absolute;left:852px;top:649px;width:16px;height:16px;box-shadow:inset -1px -1px #404040,inset 1px 1px #d4d0c8,inset -2px -2px #808080,inset 2px 2px #ffffff;background:#d4d0c8"></div>
<svg style="position:absolute;left:852px;top:649px" width="16" height="16"><polygon points="4,6 11,6 7.5,10" fill="#000"/></svg>
<div style="position:absolute;left:417px;top:665px;width:435px;height:16px;background-color:#ffffff;background-image:linear-gradient(45deg,#d4d0c8 25%,transparent 25%,transparent 75%,#d4d0c8 75%),linear-gradient(45deg,#d4d0c8 25%,transparent 25%,transparent 75%,#d4d0c8 75%);background-size:2px 2px;background-position:0 0,1px 1px"></div>
<div style="position:absolute;left:417px;top:665px;width:16px;height:16px;box-shadow:inset -1px -1px #404040,inset 1px 1px #d4d0c8,inset -2px -2px #808080,inset 2px 2px #ffffff;background:#d4d0c8"></div>
<svg style="position:absolute;left:417px;top:665px" width="16" height="16"><polygon points="9,4 9,11 5,7.5" fill="#000"/></svg>
<div style="position:absolute;left:433px;top:665px;width:371px;height:16px;box-shadow:inset -1px -1px #404040,inset 1px 1px #d4d0c8,inset -2px -2px #808080,inset 2px 2px #ffffff;background:#d4d0c8"></div>
<div style="position:absolute;left:836px;top:665px;width:16px;height:16px;box-shadow:inset -1px -1px #404040,inset 1px 1px #d4d0c8,inset -2px -2px #808080,inset 2px 2px #ffffff;background:#d4d0c8"></div>
<svg style="position:absolute;left:836px;top:665px" width="16" height="16"><polygon points="6,4 6,11 10,7.5" fill="#000"/></svg>
<div style="position:absolute;left:852px;top:665px;width:16px;height:16px;background:#d4d0c8"></div>
<div style="position:absolute;left:205px;top:683px;width:665px;height:1px;background:#000"></div>
<svg style="position:absolute;left:200px;top:682px" width="200" height="18"><path d="M93 1 L193 1 L185 17 L102 17Z" fill="#d4d0c8"/><path d="M93 1.5 L193 1.5" stroke="#000"/><path d="M193 1 L185 17" stroke="#000" stroke-width="1.2"/><path d="M3 0 L101 0 L93 17 L11 17Z" fill="#fff"/><path d="M3 0 L11 17 M101 0 L93 17" stroke="#000" stroke-width="1.2"/><path d="M97 9 L102 17" stroke="#000" stroke-width="1.2"/></svg>
<div style="position:absolute;left:211px;top:699px;width:175px;height:1px;background:#808080"></div>
<div class="t" style="left:217px;top:685px;letter-spacing:-0.3px">Расширенный</div>
<div class="t" style="left:309px;top:685px;">Стандартный</div>
<div style="position:absolute;left:873px;top:75px;width:1px;height:624px;background:#808080"></div>
<div style="position:absolute;left:874px;top:75px;width:1px;height:624px;background:#404040"></div>
<div style="position:absolute;left:307px;top:132px;width:410px;height:461px;box-shadow:inset -1px -1px #404040,inset 1px 1px #d4d0c8,inset -2px -2px #808080,inset 2px 2px #ffffff;background:#d4d0c8"></div>
<div style="position:absolute;left:310px;top:135px;width:404px;height:18px;background:linear-gradient(90deg,#0a246a,#a6caf0)"></div>
<div class="t" style="left:312px;top:138px;font-weight:bold;font-size:11px;line-height:13px;letter-spacing:0.28px;color:#fff">Свойства: Вторичный вход в систему (WIN-TGSPRGD2DH7)</div>
<div style="position:absolute;left:696px;top:137px;width:16px;height:14px;box-shadow:inset -1px -1px #404040,inset 1px 1px #d4d0c8,inset -2px -2px #808080,inset 2px 2px #ffffff;background:#d4d0c8"></div>
<svg style="position:absolute;left:696px;top:137px" width="16" height="14"><path d="M4.5 3.5 L10.5 9.5 M10.5 3.5 L4.5 9.5" stroke="#000" stroke-width="1.6"/></svg>
<div style="position:absolute;left:316px;top:181px;width:392px;height:373px;box-shadow:inset -1px -1px #404040,inset 1px 1px #ffffff,inset -2px -2px #808080;background:#d4d0c8"></div>
<div style="position:absolute;left:366px;top:163px;width:89px;height:18px;background:#d4d0c8;box-shadow:inset 1px 1px #ffffff,inset -1px 0 #404040,inset -2px 0 #808080;border-radius:2px 2px 0 0"></div>
<div class="t" style="left:372px;top:166px">Вход в систему</div>
<div style="position:absolute;left:455px;top:163px;width:96px;height:18px;background:#d4d0c8;box-shadow:inset 1px 1px #ffffff,inset -1px 0 #404040,inset -2px 0 #808080;border-radius:2px 2px 0 0"></div>
<div class="t" style="left:461px;top:166px">Восстановление</div>
<div style="position:absolute;left:551px;top:163px;width:80px;height:18px;background:#d4d0c8;box-shadow:inset 1px 1px #ffffff,inset -1px 0 #404040,inset -2px 0 #808080;border-radius:2px 2px 0 0"></div>
<div class="t" style="left:557px;top:166px">Зависимости</div>
<div style="position:absolute;left:316px;top:161px;width:50px;height:21px;background:#d4d0c8;box-shadow:inset 1px 1px #ffffff,inset -1px 0 #404040,inset -2px 0 #808080;border-radius:2px 2px 0 0"></div>
<div class="t" style="left:323px;top:164px">Общие</div>
<div class="t" style="left:331px;top:191px;">Имя службы:</div>
<div style="position:absolute;left:421px;top:190px;width:44px;height:13px;background:#0a246a"></div>
<div class="t" style="left:421px;top:191px;color:#fff">seclogon</div>
<div class="t" style="left:331px;top:215px;">Отображаемое</div>
<div class="t" style="left:331px;top:228px;">имя:</div>
<div class="t" style="left:422px;top:217px;">Вторичный вход в систему</div>
<div class="t" style="left:331px;top:249px;">Описание:</div>
<div style="position:absolute;left:422px;top:243px;width:266px;height:54px;background:#d4d0c8;box-shadow:inset 1px 1px #808080,inset -1px -1px #ffffff"></div>
<div class="t" style="left:423px;top:245px;">Позволяет запускать процессы от имени</div>
<div class="t" style="left:423px;top:258px;">другого пользователя. Если эта служба</div>
<div class="t" style="left:423px;top:271px;">остановлена, этот тип регистрации</div>
<div class="t" style="left:423px;top:284px;">пользователя недоступен. Если эта служба</div>
<div style="position:absolute;left:671px;top:244px;width:16px;height:52px;background-color:#ffffff;background-image:linear-gradient(45deg,#d4d0c8 25%,transparent 25%,transparent 75%,#d4d0c8 75%),linear-gradient(45deg,#d4d0c8 25%,transparent 25%,transparent 75%,#d4d0c8 75%);background-size:2px 2px;background-position:0 0,1px 1px"></div>
<div style="position:absolute;left:671px;top:244px;width:16px;height:16px;box-shadow:inset -1px -1px #404040,inset 1px 1px #d4d0c8,inset -2px -2px #808080,inset 2px 2px #ffffff;background:#d4d0c8"></div>
<svg style="position:absolute;left:671px;top:244px" width="16" height="16"><polygon points="4,10 11,10 7.5,6" fill="#000"/></svg>
<div style="position:absolute;left:671px;top:260px;width:16px;height:13px;box-shadow:inset -1px -1px #404040,inset 1px 1px #d4d0c8,inset -2px -2px #808080,inset 2px 2px #ffffff;background:#d4d0c8"></div>
<div style="position:absolute;left:671px;top:280px;width:16px;height:16px;box-shadow:inset -1px -1px #404040,inset 1px 1px #d4d0c8,inset -2px -2px #808080,inset 2px 2px #ffffff;background:#d4d0c8"></div>
<svg style="position:absolute;left:671px;top:280px" width="16" height="16"><polygon points="4,6 11,6 7.5,10" fill="#000"/></svg>
<div class="t" style="left:331px;top:304px;">Исполняемый файл:</div>
<div class="t" style="left:331px;top:321px;">C:\Windows\system32\svchost.exe -k netsvcs</div>
<div class="t" style="left:331px;top:350px;">Тип запуска:</div>
<div style="position:absolute;left:421px;top:346px;width:267px;height:21px;background:#ffffff;box-shadow:inset 1px 1px #808080,inset -1px -1px #ffffff,inset 2px 2px #404040,inset -2px -2px #d4d0c8"></div>
<div class="t" style="left:425px;top:351px;">Автоматически</div>
<div style="position:absolute;left:670px;top:348px;width:16px;height:17px;box-shadow:inset -1px -1px #404040,inset 1px 1px #d4d0c8,inset -2px -2px #808080,inset 2px 2px #ffffff;background:#d4d0c8"></div>
<svg style="position:absolute;left:670px;top:348px" width="16" height="17"><polygon points="4,6 11,6 7.5,10" fill="#000"/></svg>
<div class="t" style="left:331px;top:376px;"><span style="color:#0a0a84;text-decoration:underline">Помощь при настройке параметров запуска.</span></div>
<div style="position:absolute;left:331px;top:394px;width:354px;height:1px;background:#808080"></div>
<div style="position:absolute;left:331px;top:395px;width:354px;height:1px;background:#ffffff"></div>
<div class="t" style="left:331px;top:407px;">Состояние:</div>
<div class="t" style="left:421px;top:407px;">Остановлена</div>
<div style="position:absolute;left:331px;top:430px;width:84px;height:23px;box-shadow:inset -1px -1px #404040,inset 1px 1px #ffffff,inset -2px -2px #808080;background:#d4d0c8"></div>
<div class="t" style="left:331px;top:435px;width:84px;text-align:center;">Запустить</div>
<div style="position:absolute;left:421px;top:430px;width:84px;height:23px;box-shadow:inset -1px -1px #404040,inset 1px 1px #ffffff,inset -2px -2px #808080;background:#d4d0c8"></div>
<div class="t" style="left:421px;top:435px;width:84px;text-align:center;text-shadow:1px 1px #fff;color:#808080">Остановить</div>
<div style="position:absolute;left:511px;top:430px;width:86px;height:23px;box-shadow:inset -1px -1px #404040,inset 1px 1px #ffffff,inset -2px -2px #808080;background:#d4d0c8"></div>
<div class="t" style="left:511px;top:435px;width:86px;text-align:center;text-shadow:1px 1px #fff;color:#808080">Приостановить</div>
<div style="position:absolute;left:604px;top:430px;width:84px;height:23px;box-shadow:inset -1px -1px #404040,inset 1px 1px #ffffff,inset -2px -2px #808080;background:#d4d0c8"></div>
<div class="t" style="left:604px;top:435px;width:84px;text-align:center;text-shadow:1px 1px #fff;color:#808080">Продолжить</div>
<div class="t" style="left:331px;top:465px;">Можно указать параметры запуска, применяемые при запуске</div>
<div class="t" style="left:331px;top:478px;">службы из этого диалогового окна.</div>
<div class="t" style="left:331px;top:507px;">Параметры запуска:</div>
<div style="position:absolute;left:442px;top:502px;width:246px;height:23px;background:#ffffff;box-shadow:inset 1px 1px #808080,inset -1px -1px #ffffff,inset 2px 2px #404040,inset -2px -2px #d4d0c8"></div>
<div style="position:absolute;left:471px;top:560px;width:75px;height:23px;background:#000"></div>
<div style="position:absolute;left:472px;top:561px;width:73px;height:21px;box-shadow:inset -1px -1px #404040,inset 1px 1px #d4d0c8,inset -2px -2px #808080,inset 2px 2px #ffffff;background:#d4d0c8"></div>
<div class="t" style="left:471px;top:565px;width:75px;text-align:center;">OK</div>
<div style="position:absolute;left:552px;top:560px;width:75px;height:23px;box-shadow:inset -1px -1px #404040,inset 1px 1px #ffffff,inset -2px -2px #808080;background:#d4d0c8"></div>
<div class="t" style="left:552px;top:565px;width:75px;text-align:center;">Отмена</div>
<div style="position:absolute;left:633px;top:560px;width:75px;height:23px;box-shadow:inset -1px -1px #404040,inset 1px 1px #ffffff,inset -2px -2px #808080;background:#d4d0c8"></div>
<div class="t" style="left:633px;top:565px;width:75px;text-align:center;text-shadow:1px 1px #fff;color:#808080">Применить</div>
</body></html>
